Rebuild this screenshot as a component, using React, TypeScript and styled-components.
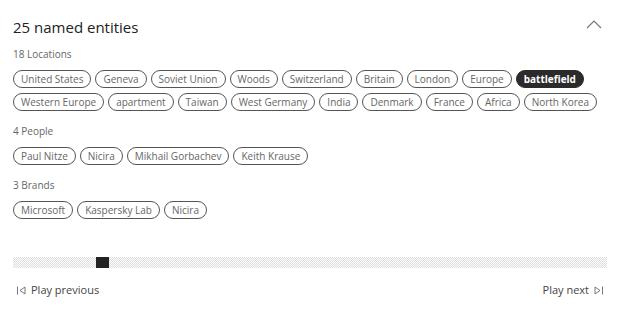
import React from 'react'
import styled, { createGlobalStyle } from 'styled-components';

const GlobalStyle = createGlobalStyle`
  body {
    margin: 0;
    background: #fff;
    font-family: "Open Sans", "Noto Sans", sans-serif;
  }
`;

const groups = [
  {
    label: '18 Locations',
    items: ['United States', 'Geneva', 'Soviet Union', 'Woods', 'Switzerland', 'Britain', 'London', 'Europe', 'battlefield',
      'Western Europe', 'apartment', 'Taiwan', 'West Germany', 'India', 'Denmark', 'France', 'Africa', 'North Korea'],
  },
  { label: '4 People', items: ['Paul Nitze', 'Nicira', 'Mikhail Gorbachev', 'Keith Krause'] },
  { label: '3 Brands', items: ['Microsoft', 'Kaspersky Lab', 'Nicira'] },
];

function App() {
  return (
    <Panel>
      <GlobalStyle />
      <Header>
        <Title>25 named entities</Title>
        <svg width="16" height="10" viewBox="0 0 16 10">
          <polyline points="1,9 8,2 15,9" fill="none" stroke="#777" strokeWidth="1.2" />
        </svg>
      </Header>

      {groups.map((g) => (
        <Section key={g.label}>
          <Label>{g.label}</Label>
          <Chips>
            {g.items.map((item) => (
              <Chip key={item} active={item === 'battlefield'}>{item}</Chip>
            ))}
          </Chips>
        </Section>
      ))}

      <Track>
        <Thumb />
      </Track>

      <Footer>
        <NavButton>
          <svg width="9" height="9" viewBox="0 0 9 9">
            <line x1="0.5" y1="0.5" x2="0.5" y2="8.5" stroke="#777" />
            <polygon points="8,1 3,4.5 8,8" fill="none" stroke="#777" />
          </svg>
          Play previous
        </NavButton>
        <NavButton>
          Play next
          <svg width="9" height="9" viewBox="0 0 9 9">
            <polygon points="1,1 6,4.5 1,8" fill="none" stroke="#777" />
            <line x1="8.5" y1="0.5" x2="8.5" y2="8.5" stroke="#777" />
          </svg>
        </NavButton>
      </Footer>
    </Panel>
  )
}

export default App

const Panel = styled.div`
  width: 624px;
  height: 309px;
  box-sizing: border-box;
  padding: 13px 17px 0 13px;
`;

const Header = styled.div`
  display: flex;
  align-items: center;
  justify-content: space-between;
  height: 28px;
  padding-right: 5px;
  margin-bottom: 6px;
  svg { margin-top: -6px; }
`;

const Title = styled.h1`
  margin: 0;
  font-size: 15px;
  font-weight: 400;
  color: #222;
`;

const Section = styled.div`
  & + & { margin-top: 13px; }
`;

const Label = styled.div`
  height: 14px;
  line-height: 14px;
  font-size: 10px;
  color: #666;
  margin-bottom: 9px;
`;

const Chips = styled.div`
  display: flex;
  flex-wrap: wrap;
  gap: 5px 4px;
`;

const Chip = styled.span<{ active?: boolean }>`
  display: inline-flex;
  align-items: center;
  height: 18px;
  box-sizing: border-box;
  padding: 0 7px;
  border: 1px solid ${(p) => (p.active ? '#2b2b2b' : '#555')};
  border-radius: 9px;
  background: ${(p) => (p.active ? '#2b2b2b' : '#fff')};
  color: ${(p) => (p.active ? '#fff' : '#666')};
  font-size: 10px;
  font-weight: ${(p) => (p.active ? 700 : 400)};
  white-space: nowrap;
`;

const Track = styled.div`
  position: relative;
  margin-top: 38px;
  height: 11px;
  background: repeating-conic-gradient(#dcdcdc 0 25%, #fff 0 50%) 0 0 / 2px 2px;
`;

const Thumb = styled.div`
  position: absolute;
  left: 83px;
  top: 0;
  width: 13px;
  height: 11px;
  background: #222;
`;

const Footer = styled.div`
  display: flex;
  justify-content: space-between;
  margin-top: 14px;
  padding: 0 4px;
`;

const NavButton = styled.div`
  display: flex;
  align-items: center;
  gap: 5px;
  font-size: 11px;
  line-height: 16px;
  color: #444;
`;
